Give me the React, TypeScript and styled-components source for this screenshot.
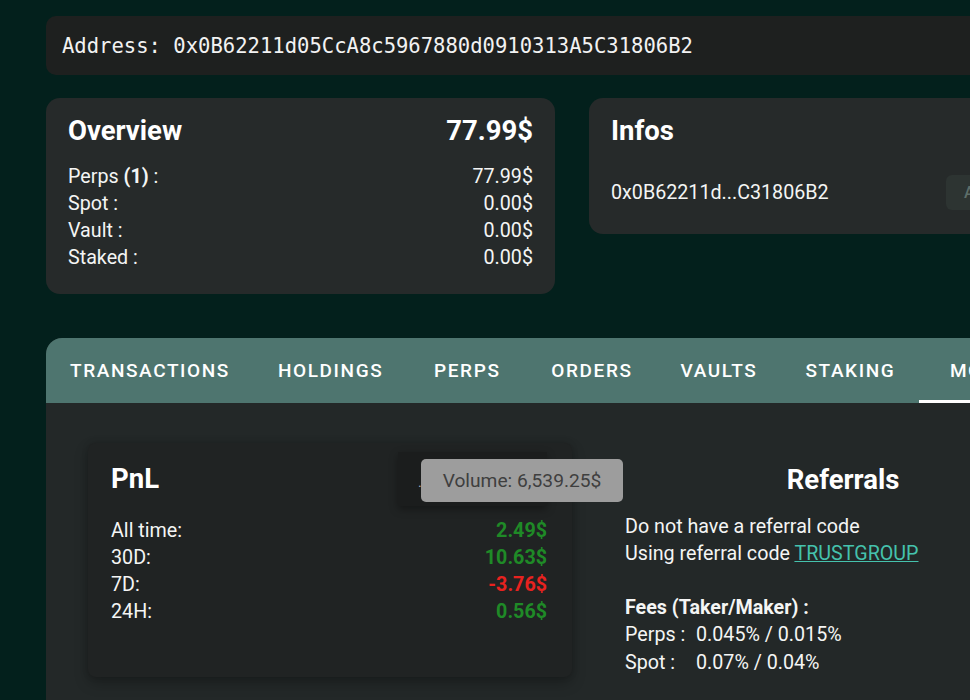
import React, { FC } from 'react';
import styled, { createGlobalStyle } from 'styled-components';

const GlobalStyle = createGlobalStyle`
  html, body {
    margin: 0;
    padding: 0;
    background: #03201c;
    overflow: hidden;
  }
  body {
    font-family: Roboto, "Liberation Sans", sans-serif;
    color: #f4f5f4;
  }
`

type Row = { label: React.ReactNode, value: string }
type PnlRow = { label: string, value: string, negative?: boolean }

const overviewRows: Row[] = [
    {label: <>Perps <b>(1)</b> :</>, value: '77.99$'},
    {label: 'Spot :', value: '0.00$'},
    {label: 'Vault :', value: '0.00$'},
    {label: 'Staked :', value: '0.00$'},
]

const pnlRows: PnlRow[] = [
    {label: 'All time:', value: '2.49$'},
    {label: '30D:', value: '10.63$'},
    {label: '7D:', value: '-3.76$', negative: true},
    {label: '24H:', value: '0.56$'},
]

const tabs = ['Transactions', 'Holdings', 'Perps', 'Orders', 'Vaults', 'Staking', 'More']

export const App: FC = () => {
    return (
        <Page>
            <GlobalStyle/>
            <AddressBar>Address: 0x0B62211d05CcA8c5967880d0910313A5C31806B2</AddressBar>

            <CardsRow>
                <Card>
                    <CardHeader>
                        <CardTitle>Overview</CardTitle>
                        <CardTitle>77.99$</CardTitle>
                    </CardHeader>
                    <Rows>
                        {overviewRows.map((r, i) => (
                            <LineRow key={i}>
                                <span>{r.label}</span>
                                <span>{r.value}</span>
                            </LineRow>
                        ))}
                    </Rows>
                </Card>

                <InfoCard>
                    <CardTitle>Infos</CardTitle>
                    <InfoRow>
                        <span>0x0B62211d...C31806B2</span>
                        <GhostButton disabled>Add label</GhostButton>
                    </InfoRow>
                </InfoCard>
            </CardsRow>

            <TabsPanel>
                <TabBar>
                    {tabs.map(t => (
                        <Tab key={t} $active={t === 'More'}>{t}</Tab>
                    ))}
                </TabBar>

                <TabBody>
                    <PnlCard>
                        <PnlHeader>
                            <CardTitle>PnL</CardTitle>
                            <ChartChip>
                                <ChipDot>.</ChipDot>
                                <Tooltip>Volume: 6,539.25$</Tooltip>
                            </ChartChip>
                        </PnlHeader>
                        <PnlRows>
                            {pnlRows.map(r => (
                                <LineRow key={r.label}>
                                    <span>{r.label}</span>
                                    <PnlValue $negative={r.negative}>{r.value}</PnlValue>
                                </LineRow>
                            ))}
                        </PnlRows>
                    </PnlCard>

                    <Referrals>
                        <ReferralsTitle>Referrals</ReferralsTitle>
                        <TextLine>Do not have a referral code</TextLine>
                        <TextLine>Using referral code <RefLink href="#">TRUSTGROUP</RefLink></TextLine>
                        <Spacer/>
                        <TextLine><b>Fees (Taker/Maker) :</b></TextLine>
                        <FeeRow><span>Perps :</span><span>0.045% / 0.015%</span></FeeRow>
                        <FeeRow><span>Spot :</span><span>0.07% / 0.04%</span></FeeRow>
                    </Referrals>
                </TabBody>
            </TabsPanel>
        </Page>
    )
};

export default App;

let Page = styled.div`
  width: 1052px;
  padding: 16px 0 0 46px;
  display: flex;
  flex-direction: column;
`

let AddressBar = styled.div`
  height: 59px;
  display: flex;
  align-items: center;
  padding-left: 16px;
  background: #1e201f;
  border-radius: 10px;
  font-family: "DejaVu Sans Mono", "Liberation Mono", monospace;
  font-size: 20.55px;
  color: #f2f2f2;
`

let CardsRow = styled.div`
  display: grid;
  grid-template-columns: 509px 509px;
  gap: 34px;
  margin-top: 23px;
  align-items: start;
`

let Card = styled.div`
  background: #262a2a;
  border-radius: 14px;
  padding: 18px 22px 23px 22px;
`

let InfoCard = styled(Card)`
  padding: 18px 22px 24px 22px;
`

let CardHeader = styled.div`
  display: flex;
  justify-content: space-between;
  align-items: center;
`

let CardTitle = styled.div`
  font-size: 27.5px;
  font-weight: 700;
  line-height: 30px;
  color: #ffffff;
`

let Rows = styled.div`
  margin-top: 17px;
`

let LineRow = styled.div`
  display: flex;
  justify-content: space-between;
  font-size: 19.7px;
  line-height: 27px;
`

let InfoRow = styled.div`
  display: flex;
  justify-content: space-between;
  align-items: center;
  margin-top: 29px;
  font-size: 19.7px;
`

let GhostButton = styled.button`
  width: 130px;
  height: 35px;
  border: none;
  border-radius: 6px;
  background: #2d3432;
  color: #5d6e69;
  font-family: Roboto, sans-serif;
  font-size: 16px;
  font-weight: 500;
  text-transform: uppercase;
  text-align: left;
  padding-left: 18px;
`

let TabsPanel = styled.div`
  margin-top: 44px;
  border-radius: 16px 16px 0 0;
  overflow: hidden;
  background: #232828;
  height: 400px;
`

let TabBar = styled.div`
  display: flex;
  height: 65px;
  background: #4e756f;
`

let Tab = styled.div<{ $active?: boolean }>`
  min-width: 120px;
  padding: 3px 24px 0 24px;
  display: flex;
  align-items: center;
  justify-content: center;
  box-sizing: border-box;
  font-size: 19px;
  font-weight: 500;
  letter-spacing: 1.6px;
  text-transform: uppercase;
  color: #ffffff;
  border-bottom: 3px solid ${p => p.$active ? '#ffffff' : 'transparent'};
`

let TabBody = styled.div`
  display: grid;
  grid-template-columns: 484px 484px;
  gap: 29px;
  padding: 40px 42px;
`

let PnlCard = styled.div`
  background: #202323;
  border-radius: 8px;
  padding: 9px 25px 24px 23px;
  box-shadow: 0 6px 14px rgba(0, 0, 0, 0.25), 0 0 6px rgba(0, 0, 0, 0.15);
`

let PnlHeader = styled.div`
  height: 54px;
  display: flex;
  justify-content: space-between;
  align-items: center;
`

let ChartChip = styled.div`
  position: relative;
  width: 149px;
  height: 54px;
  background: #1b1d1d;
  box-shadow: 0 3px 8px rgba(0, 0, 0, 0.35);
`

let ChipDot = styled.span`
  position: absolute;
  left: 20px;
  top: 22px;
  font-size: 14px;
  color: #aab;
`

let Tooltip = styled.div`
  position: absolute;
  left: 23px;
  top: 7px;
  width: 202px;
  height: 43px;
  display: flex;
  align-items: center;
  justify-content: center;
  background: #9d9d9d;
  border-radius: 5px;
  font-size: 19.2px;
  color: #3f3f3f;
  white-space: nowrap;
`

let PnlRows = styled.div`
  margin-top: 11px;
`

let PnlValue = styled.span<{ $negative?: boolean }>`
  font-weight: 700;
  color: ${p => p.$negative ? '#e8221f' : '#1f8a27'};
`

let Referrals = styled.div`
  padding: 9px 24px 0 24px;
`

let ReferralsTitle = styled.div`
  height: 54px;
  display: flex;
  align-items: center;
  justify-content: center;
  font-size: 27.5px;
  font-weight: 700;
  color: #ffffff;
  margin-bottom: 7px;
`

let TextLine = styled.div`
  font-size: 19.7px;
  line-height: 27px;
`

let RefLink = styled.a`
  color: #45c2ad;
  text-decoration: underline;
`

let Spacer = styled.div`
  height: 27px;
`

let FeeRow = styled.div`
  display: grid;
  grid-template-columns: 71px auto;
  font-size: 19.7px;
  line-height: 28px;
`
